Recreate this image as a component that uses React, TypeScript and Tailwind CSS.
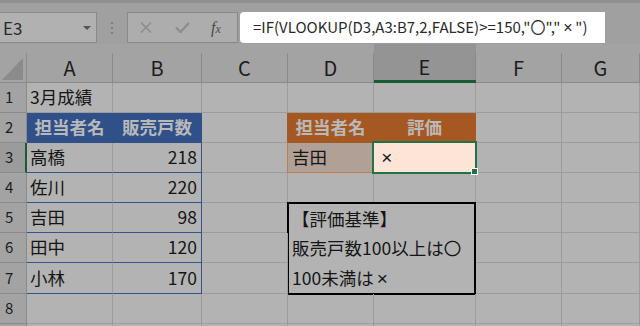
import React from "react";

const FONT = "font-['Noto_Sans_CJK_JP',sans-serif]";

function Cross({ size }: { size: "cell" | "bar" }) {
  return size === "cell" ? (
    <span className="inline-block w-[17.5px] text-center font-['Liberation_Sans',sans-serif] font-light text-[19px] leading-none">×</span>
  ) : (
    <span className="inline-block w-[15px] text-center font-['Liberation_Sans',sans-serif] text-[16px] leading-none">×</span>
  );
}

function ColHeader({ label, selected }: { label: string; selected?: boolean }) {
  return (
    <div
      className={
        selected
          ? "flex flex-col bg-[#949494] border-b-[3px] border-[#1b5a36]"
          : "flex flex-col bg-[#a3a3a3] border-b border-[#8a8a8a]"
      }
    >
      <div className="mt-[9px] flex-1 border-r border-[#8a8a8a] flex items-center justify-center text-[20px] leading-none text-[#1c1c1c]">
        {label}
      </div>
    </div>
  );
}

function RowHeader({ n, selected }: { n?: number; selected?: boolean }) {
  return (
    <div
      className={
        selected
          ? "bg-[#9b9b9b] border-r-2 border-r-[#1b5a36] border-b border-b-[#8a8a8a] flex items-center pl-[5px] text-[15px] text-[#1c1c1c]"
          : "bg-[#a3a3a3] border-r border-b border-[#8a8a8a] flex items-center pl-[5px] text-[15px] text-[#1c1c1c]"
      }
    >
      {n}
    </div>
  );
}

const C = "border-r border-b border-[#9c9c9c]";

function Empty() {
  return <div className={C} />;
}

function TextCell({ t }: { t: string }) {
  return <div className={C + " flex items-center pl-[3px] text-[17.5px] text-[#151515] whitespace-nowrap"}>{t}</div>;
}

function NameCell({ t }: { t: string }) {
  return (
    <div className="border-r border-r-[#9c9c9c] border-b border-b-[#33538f] flex items-center pl-[3px] text-[17.5px] text-[#151515]">
      {t}
    </div>
  );
}

function NumCell({ t }: { t: string }) {
  return (
    <div className="border-r border-b border-[#33538f] flex items-center justify-end pr-[4px] text-[17.5px] text-[#151515]">
      {t}
    </div>
  );
}

function BlueHead({ t }: { t: string }) {
  return (
    <div className="bg-[#30508a] border-r border-b border-[#30508a] flex items-center justify-center text-[17.5px] font-bold text-[#b9b9b9]">
      {t}
    </div>
  );
}

function OrangeHead({ t }: { t: string }) {
  return (
    <div className="bg-[#a65822] border-r border-b border-[#a65822] flex items-center justify-center text-[17.5px] font-bold text-[#b9b9b9]">
      {t}
    </div>
  );
}

export default function App() {
  return (
    <div className={"w-[640px] h-[326px] overflow-hidden bg-[#b3b3b3] " + FONT}>
      {/* top strip */}
      <div className="h-[3px] bg-[#8f8f8f]" />
      {/* formula bar */}
      <div className="h-[41px] bg-[#a0a0a0] flex items-start pt-[9px]">
        <div className="-ml-px w-[98px] h-[31px] border border-[#8a8a8a] bg-[#b1b1b1] flex items-center pl-[3px]">
          <span className="text-[17px] text-[#2a2a2a] leading-none">E3</span>
          <div className="ml-auto mr-[5px] w-0 h-0 border-l-[4px] border-r-[4px] border-t-[4px] border-l-transparent border-r-transparent border-t-[#555555]" />
        </div>
        <div className="ml-[14px] mt-[10px] flex flex-col gap-[3px]">
          <div className="w-[2px] h-[2px] bg-[#7d7d7d]" />
          <div className="w-[2px] h-[2px] bg-[#7d7d7d]" />
          <div className="w-[2px] h-[2px] bg-[#7d7d7d]" />
        </div>
        <div className="ml-[14px] w-[111px] h-[31px] border border-[#8a8a8a] bg-[#adadad] flex items-center pl-[12px]">
          <svg width="12" height="11" viewBox="0 0 12 11">
            <path d="M1 0.5 L11 10.5 M11 0.5 L1 10.5" stroke="#8c8c8c" strokeWidth="1.6" fill="none" />
          </svg>
          <svg className="ml-[23px]" width="15" height="11" viewBox="0 0 15 11">
            <path d="M1 5.5 L5.5 10 L14 1" stroke="#8c8c8c" strokeWidth="2.2" fill="none" />
          </svg>
          <span className="ml-[21px] font-['Liberation_Serif',serif] italic text-[16px] text-[#4a4a4a] leading-none">
            f<span className="text-[12px]">x</span>
          </span>
        </div>
        <div className="ml-[2px] w-[365px] h-[31px] rounded-l-[4px] bg-white flex items-center pl-[13px] text-[15px] text-[#2a2a2a] whitespace-nowrap">
          =IF(VLOOKUP(D3,A3:B7,2,FALSE)&gt;=150,"〇","<Cross size="bar" />")
        </div>
      </div>

      {/* grid */}
      <div className="grid grid-cols-[27px_86px_89px_86px_86px_102px_86px_78px] grid-rows-[39px_30px_30px_30px_30px_30px_30px_31px_30px_30px]">
        {/* header row */}
        <div className="bg-[#a3a3a3] border-b border-[#8a8a8a] flex flex-col">
          <div className="mt-[9px] flex-1 border-r border-[#8a8a8a] flex items-end justify-end pr-[3px] pb-[2px]">
            <svg width="21" height="22" viewBox="0 0 21 22">
              <polygon points="0,22 21,22 21,0" fill="#8b8b8b" />
            </svg>
          </div>
        </div>
        <ColHeader label="A" />
        <ColHeader label="B" />
        <ColHeader label="C" />
        <ColHeader label="D" />
        <ColHeader label="E" selected />
        <ColHeader label="F" />
        <ColHeader label="G" />

        {/* row 1 */}
        <RowHeader n={1} />
        <TextCell t="3月成績" />
        <Empty />
        <Empty />
        <Empty />
        <Empty />
        <Empty />
        <Empty />

        {/* row 2 */}
        <RowHeader n={2} />
        <BlueHead t="担当者名" />
        <BlueHead t="販売戸数" />
        <div className="border-r border-r-[#a65822] border-b border-b-[#9c9c9c]" />
        <OrangeHead t="担当者名" />
        <OrangeHead t="評価" />
        <Empty />
        <Empty />

        {/* row 3 */}
        <RowHeader n={3} selected />
        <NameCell t="高橋" />
        <NumCell t="218" />
        <div className="border-r border-r-[#c07b50] border-b border-b-[#9c9c9c]" />
        <div className="bg-[#b0a096] border-r border-r-[#e8e8e8] border-b border-b-[#c07b50] flex items-center pl-[4px] text-[17.5px] text-[#151515]">
          吉田
        </div>
        <div className="relative z-10 -ml-[2px] -mt-[2px] -mr-px -mb-px border-2 border-[#217346] bg-[#fce4d6] flex items-center pl-[4px] text-[17.5px] text-[#151515]">
          <Cross size="cell" />
          <div className="absolute -right-[3px] -bottom-[3px] w-[5px] h-[5px] bg-[#217346] border border-white box-content" />
        </div>
        <Empty />
        <Empty />

        {/* row 4 */}
        <RowHeader n={4} />
        <NameCell t="佐川" />
        <NumCell t="220" />
        <Empty />
        <Empty />
        <Empty />
        <Empty />
        <Empty />

        {/* row 5 */}
        <RowHeader n={5} />
        <NameCell t="吉田" />
        <NumCell t="98" />
        <Empty />
        <div className="col-span-2 row-span-3 -ml-px -mt-px -mb-px border-2 border-black flex flex-col pl-[3px] text-[17.5px] text-[#151515]">
          <div className="h-[30px] flex items-center">【評価基準】</div>
          <div className="h-[30px] flex items-center whitespace-nowrap">販売戸数100以上は〇</div>
          <div className="h-[30px] flex items-center whitespace-nowrap">
            100未満は<Cross size="cell" />
          </div>
        </div>
        <Empty />
        <Empty />

        {/* row 6 */}
        <RowHeader n={6} />
        <NameCell t="田中" />
        <NumCell t="120" />
        <Empty />
        <Empty />
        <Empty />

        {/* row 7 */}
        <RowHeader n={7} />
        <NameCell t="小林" />
        <NumCell t="170" />
        <Empty />
        <Empty />
        <Empty />

        {/* row 8 */}
        <RowHeader n={8} />
        <Empty />
        <Empty />
        <Empty />
        <Empty />
        <Empty />
        <Empty />
        <Empty />

        {/* row 9 (cut off) */}
        <RowHeader />
        <Empty />
        <Empty />
        <Empty />
        <Empty />
        <Empty />
        <Empty />
        <Empty />
      </div>
    </div>
  );
}
